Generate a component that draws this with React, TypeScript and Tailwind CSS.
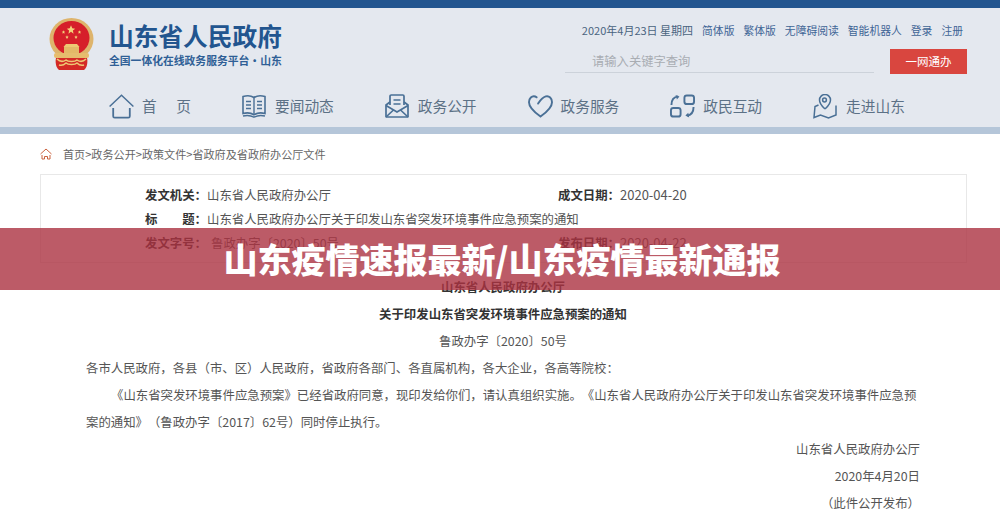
import React from "react";

const cjk = { fontFamily: '"Noto Sans CJK SC", "Noto Sans", sans-serif' };

function Emblem() {
  const stars = [
    [22, 11.5, 4.2],
    [14.5, 14, 1.7],
    [18, 19, 1.7],
    [27, 19, 1.7],
    [30.5, 14, 1.7],
  ];
  return (
    <svg viewBox="0 0 46 52" className="w-[46px] h-[52px] shrink-0">
      <ellipse cx="22.500" cy="21" rx="22" ry="21" fill="#deb46c" />
      <ellipse cx="22.500" cy="20" rx="18" ry="17" fill="#d61f2a" />
      {stars.map(([x, y, r], i) => (
        <polygon
          key={i}
          fill="#f3d27a"
          points={`${x},${y - r} ${x + r * 0.3},${y - r * 0.3} ${x + r},${y - r * 0.2} ${x + r * 0.45},${y + r * 0.25} ${x + r * 0.6},${y + r} ${x},${y + r * 0.55} ${x - r * 0.6},${y + r} ${x - r * 0.45},${y + r * 0.25} ${x - r},${y - r * 0.2} ${x - r * 0.3},${y - r * 0.3}`}
        />
      ))}
      <path d="M17 26h11l2.500 3h-16z" fill="#edc873" />
      <rect x="15" y="29" width="15" height="6" fill="#e3b968" />
      <rect x="5" y="35" width="35" height="5" rx="2" fill="#e6bd6e" />
      <path d="M7 40h31c1 4 0 10-3 12H10c-3-2-4-8-3-12z" fill="#d42a26" />
      <path d="M8 41c3 3 6 3 9 1 2 2 9 2 11 0 3 2 6 2 9-1M10 47c3 1 5 0 7-2 2 2 9 2 11 0 2 2 4 3 7 2" fill="none" stroke="#edc873" strokeWidth="1.500" />
    </svg>
  );
}

const iconStroke = "#4a7096";

function HomeIcon() {
  return (
    <svg viewBox="0 0 25 25" className="w-[25px] h-[25px]" fill="none" stroke={iconStroke} strokeWidth="1.5">
      <path d="M.6 12.5 12.5 1.2l11.9 11.3" />
      <path d="M4.2 14v8.2c0 1 .6 1.5 1.5 1.5h13.6c.9 0 1.5-.5 1.5-1.5V14" strokeWidth="1.8" />
    </svg>
  );
}

function BookIcon() {
  return (
    <svg viewBox="0 0 24 24" className="w-[24px] h-[24px]" fill="none" stroke={iconStroke} strokeWidth="1.6">
      <path d="M1 2.5c4-1.2 8-1 11 1 3-2 7-2.2 11-1v17c-4-1-8-.6-11 1.2-3-1.8-7-2.2-11-1.2z" />
      <path d="M12 3.5v17M4 7.5h5M4 11h5M4 14.5h5M15 7.5h5M15 11h5M15 14.5h5" strokeWidth="1.4" />
      <path d="M1 22c4-1 8-.5 11 1.2 3-1.7 7-2.2 11-1.2" strokeWidth="1.4" />
    </svg>
  );
}

function MailIcon() {
  return (
    <svg viewBox="0 0 24 24" className="w-[24px] h-[24px]" fill="none" stroke={iconStroke} strokeWidth="1.7">
      <path d="M5 11V2.2C5 1.5 5.5 1 6.2 1h11.6c.7 0 1.2.5 1.2 1.2V11" />
      <path d="M8.5 6h7M8.5 10h7" />
      <path d="M5 8 1 11v11.5c0 .3.2.5.5.5h21c.3 0 .5-.2.5-.5V11l-4-3" />
      <path d="M1 11.5 12 18l11-6.5M1 23l8-7.5M23 23l-8-7.5" />
    </svg>
  );
}

function HeartIcon() {
  return (
    <svg viewBox="0 0 26 25" className="w-[25px] h-[24px]" fill="none" stroke={iconStroke} strokeWidth="2">
      <path d="M9 3.5 7.5 2.6C4 1.5 1 4.5 1 8.5c0 4.500 6.500 11 12 15 5.500-4 12-10.500 12-15 0-4-3-7-6.500-6-3 .8-5.500 3.500-8 7.500" strokeLinecap="round" />
    </svg>
  );
}

function SwapIcon() {
  return (
    <svg viewBox="0 0 26 24" className="w-[25px] h-[24px]" fill="none" stroke={iconStroke} strokeWidth="2">
      <rect x="15" y="1" width="10" height="9" rx="2.500" />
      <rect x="1" y="14" width="10" height="9" rx="2.500" />
      <path d="M1.500 11c0-5 2.500-8.500 7-9" />
      <path d="m5.800 .5 4 1.700-2.600 3" fill={iconStroke} stroke="none" />
      <path d="M24.500 13c0 5-2.500 8.500-7 9" />
      <path d="m20 24-4-2 3-3" fill={iconStroke} stroke="none" />
    </svg>
  );
}

function MapIcon() {
  return (
    <svg viewBox="0 0 24 25" className="w-[24px] h-[25px]" fill="none" stroke={iconStroke} strokeWidth="1.500">
      <path d="M12 16.500c-3-2.800-5-5.500-5-8.500a5.500 5.500 0 0 1 11 0c0 3-2 5.700-5 8.500z" transform="translate(-.5 -2)" />
      <circle cx="11.500" cy="6" r="1.900" />
      <path d="M5.500 11 2 12.500 1 23.500l6.500-2.500 8 3 7.500-3V11.500" />
    </svg>
  );
}

const navText = "text-[14.700px] text-[#5c7186]";

export default function App() {
  return (
    <div className="relative w-[1000px] h-[518px] overflow-hidden bg-white text-[#555] [text-spacing-trim:space-all]" style={cjk}>
      {/* header */}
      <div className="h-[8px] bg-[#22558f]" />
      <div className="h-[119px] bg-[#e4e8ef] flex flex-col">
        <div className="flex justify-between pl-[49px] pr-[33px] pt-[10px] h-[77px]">
          <div className="flex gap-[14px]">
            <Emblem />
            <div className="pt-[1px]">
              <div className="text-[24.700px] leading-[32px] font-bold text-[#22558f] whitespace-nowrap">山东省人民政府</div>
              <div className="text-[10.800px] leading-[14px] mt-[2px] font-bold text-[#2f5f96] whitespace-nowrap">全国一体化在线政务服务平台·山东</div>
            </div>
          </div>
          <div className="w-[402px] flex flex-col">
            <div className="flex justify-end gap-[9px] pr-[4px] text-[10.800px] leading-[16px] mt-[4px] text-[#3f6596] whitespace-nowrap">
              <span className="text-[11px] text-[#4a6480]">2020年4月23日 星期四</span>
              <span>简体版</span>
              <span>繁体版</span>
              <span>无障碍阅读</span>
              <span>智能机器人</span>
              <span>登录</span>
              <span>注册</span>
            </div>
            <div className="flex justify-between mt-[11px]">
              <div className="w-[309px] h-[24px] border-b border-[#ccd2da] pl-[27px] text-[12.300px] leading-[24px] text-[#a9adb3]">请输入关键字查询</div>
              <div className="w-[77px] h-[25px] bg-[#d9463f] text-white text-[11.500px] leading-[25px] text-center">一网通办</div>
            </div>
          </div>
        </div>
        <nav className="flex items-center gap-[51px] pl-[109px] h-[42px] whitespace-nowrap">
          <div className="flex items-center gap-[8px]">
            <HomeIcon />
            <span className={`${navText} w-[49px] flex justify-between`}>
              <span>首</span>
              <span>页</span>
            </span>
          </div>
          <div className="flex items-center gap-[9px]">
            <BookIcon />
            <span className={navText}>要闻动态</span>
          </div>
          <div className="flex items-center gap-[9px]">
            <MailIcon />
            <span className={navText}>政务公开</span>
          </div>
          <div className="flex items-center gap-[8px]">
            <HeartIcon />
            <span className={navText}>政务服务</span>
          </div>
          <div className="flex items-center gap-[8px]">
            <SwapIcon />
            <span className={navText}>政民互动</span>
          </div>
          <div className="flex items-center gap-[9px]">
            <MapIcon />
            <span className={navText}>走进山东</span>
          </div>
        </nav>
      </div>
      <div className="h-[7px] bg-[#b5c6d9]" />

      {/* breadcrumb */}
      <div className="flex items-center h-[24px] mt-[8px] pl-[40px] gap-[11px] text-[11.100px] text-[#666]">
        <svg viewBox="0 0 12 12" className="w-[12px] h-[12px]" fill="none" stroke="#c9623f" strokeWidth="1">
          <path d="M.5 6 6 1l5.500 5" />
          <path d="M2 7v4h2.500V8.500h3V11H10V7" />
        </svg>
        <span className="whitespace-nowrap">首页&gt;政务公开&gt;政策文件&gt;省政府及省政府办公厅文件</span>
      </div>

      {/* document info */}
      <div className="mr-[33px] ml-[40px] mt-[8px] h-[89px] border border-[#e8e8e8] pt-[8px] pl-[104px] text-[12.400px] leading-[24px] text-[#555] whitespace-nowrap">
        <div className="flex">
          <div className="w-[413px] flex">
            <span className="w-[62px] font-bold text-[#333]">发文机关：</span>
            <span>山东省人民政府办公厅</span>
          </div>
          <span className="w-[62px] font-bold text-[#333]">成文日期：</span>
          <span className="text-[13px]">2020-04-20</span>
        </div>
        <div className="flex">
          <span className="w-[62px] flex justify-between font-bold text-[#333]">
            <span>标</span>
            <span>题：</span>
          </span>
          <span>山东省人民政府办公厅关于印发山东省突发环境事件应急预案的通知</span>
        </div>
        <div className="flex">
          <div className="w-[413px] flex">
            <span className="w-[62px] font-bold text-[#333]">发文字号：</span>
            <span className="pl-[4px]">鲁政办字〔2020〕50号</span>
          </div>
          <span className="w-[62px] font-bold text-[#333]">发布日期：</span>
          <span className="text-[13px]">2020-04-22</span>
        </div>
      </div>

      {/* body */}
      <div className="ml-[86px] w-[834px] mt-[11px] text-[12.400px] leading-[27px] text-[#555]">
        <p className="text-center font-bold text-[#333]">山东省人民政府办公厅</p>
        <p className="text-center font-bold text-[#333]">关于印发山东省突发环境事件应急预案的通知</p>
        <p className="text-center">鲁政办字〔2020〕50号</p>
        <p>各市人民政府，各县（市、区）人民政府，省政府各部门、各直属机构，各大企业，各高等院校：</p>
        <p className="indent-[25px]">《山东省突发环境事件应急预案》已经省政府同意，现印发给你们，请认真组织实施。《山东省人民政府办公厅关于印发山东省突发环境事件应急预案的通知》（鲁政办字〔2017〕62号）同时停止执行。</p>
        <p className="text-right">山东省人民政府办公厅</p>
        <p className="text-right">2020年4月20日</p>
        <p className="text-right">（此件公开发布）</p>
      </div>

      {/* title band over the page */}
      <div className="absolute left-0 right-0 top-[228px] h-[62px] bg-[#ab3241]/80 flex items-center justify-center pl-[4px]">
        <h1 className="text-[34px] leading-none font-black text-white whitespace-nowrap">山东疫情速报最新/山东疫情最新通报</h1>
      </div>
    </div>
  );
}
